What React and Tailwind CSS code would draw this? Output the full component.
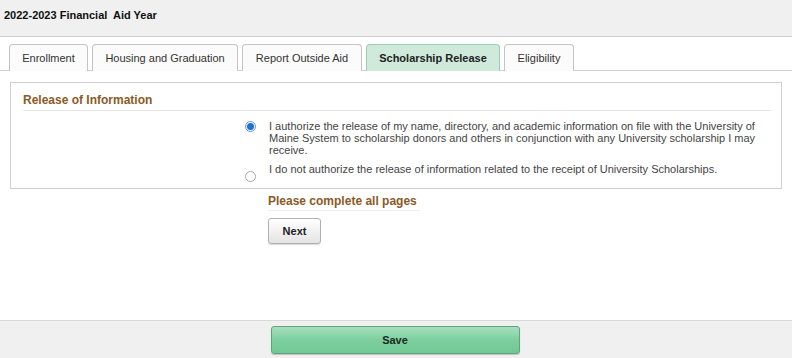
import { useState } from "react";

const tabs = [
  { label: "Enrollment", w: "w-[79px]" },
  { label: "Housing and Graduation", w: "w-[146px]" },
  { label: "Report Outside Aid", w: "w-[120px]" },
  { label: "Scholarship Release", w: "w-[134px]", active: true },
  { label: "Eligibility", w: "w-[70px]" },
];

function Radio({ checked, onClick }) {
  return (
    <button
      onClick={onClick}
      className={
        "w-[11px] h-[11px] rounded-full border flex items-center justify-center " +
        (checked ? "border-[#5b9be0] bg-white" : "border-[#a8a8a8] bg-white")
      }
    >
      {checked && <span className="w-[7px] h-[7px] rounded-full bg-[#1e6fd9]" />}
    </button>
  );
}

export default function App() {
  const [choice, setChoice] = useState("yes");

  return (
    <div className="w-[792px] h-[358px] bg-white flex flex-col font-['Liberation_Sans',Arial,sans-serif] text-[#333]">
      <div className="h-[37px] bg-[#f0f0f0] border-b border-[#cfcfcf] flex items-center px-[4px] pb-[6px]">
        <span className="text-[11px] font-bold text-[#111] whitespace-pre">2022-2023 Financial  Aid Year</span>
      </div>

      <div className="mt-[7px] border-b border-[#cfcfcf] flex gap-[4px] pl-[9px] h-[27px]">
        {tabs.map((t) => (
          <div
            key={t.label}
            className={
              t.w +
              " h-[27px] rounded-t-[4px] border border-b-0 flex items-center justify-center text-[11px] " +
              (t.active
                ? "bg-[#cfeadb] border-[#9fcfb2] font-bold text-[#222]"
                : "bg-[#fbfbfb] border-[#c4c4c4] text-[#333]")
            }
          >
            {t.label}
          </div>
        ))}
      </div>

      <div className="mx-[10px] mt-[11px] border border-[#d0d0d0] h-[107px] px-[12px] pt-[10px]">
        <div className="text-[12px] leading-[14px] font-bold text-[#8a5a26] pb-[3px] border-b border-[#e6e6e6] mr-[-2px]">
          Release of Information
        </div>
        <div className="pl-[221px] mt-[9px] flex flex-col">
          <div className="flex">
            <div className="w-[25px] shrink-0 pt-[1px] pl-[1px]">
              <Radio checked={choice === "yes"} onClick={() => setChoice("yes")} />
            </div>
            <p className="text-[11px] leading-[12px] w-[494px] shrink-0 text-[#444]">
              I authorize the release of my name, directory, and academic information on file with the University of Maine System to scholarship donors and others in conjunction with any University scholarship I may receive.
            </p>
          </div>
          <div className="flex mt-[7px]">
            <div className="w-[25px] shrink-0 pt-[8px] pl-[1px]">
              <Radio checked={choice === "no"} onClick={() => setChoice("no")} />
            </div>
            <p className="text-[11px] leading-[12px] text-[#444]">
              I do not authorize the release of information related to the receipt of University Scholarships.
            </p>
          </div>
        </div>
      </div>

      <div className="pl-[268px] mt-[5px]">
        <div className="text-[12px] leading-[14px] font-bold text-[#8a5a26] w-[152px] border-b border-[#eee] pb-[2px]">
          Please complete all pages
        </div>
        <button className="mt-[7px] w-[53px] h-[26px] rounded-[3px] border border-[#b0b0b0] bg-gradient-to-b from-white to-[#e4e4e4] shadow-[0_1px_1px_rgba(0,0,0,0.15)] text-[11px] font-bold text-[#222]">
          Next
        </button>
      </div>

      <div className="flex-1" />

      <div className="h-[38px] bg-[#f0f0f0] border-t border-[#d8d8d8] flex justify-center pt-[5px] pr-[2px]">
        <button className="w-[249px] h-[28px] rounded-[3px] border border-[#5ea57c] bg-gradient-to-b from-[#a6dfbd] via-[#7dcf9e] to-[#72c894] shadow-[0_1px_1px_rgba(0,0,0,0.2)] text-[11px] font-bold text-[#1a2a1f]">
          Save
        </button>
      </div>
    </div>
  );
}
